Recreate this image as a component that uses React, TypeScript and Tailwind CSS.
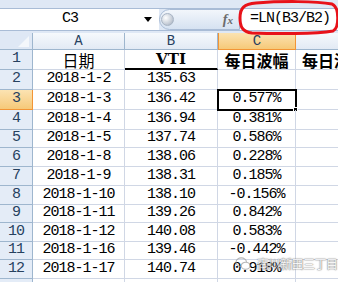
import React from 'react';

const rows = [
  { n: '1', h: 'h-[20px]', a: '日期', b: 'VTI', c: '每日波幅', d: '每日波幅', head: true },
  { n: '2', h: 'h-[20px]', a: '2018-1-2', b: '135.63', c: '' },
  { n: '3', h: 'h-[20px]', a: '2018-1-3', b: '136.42', c: '0.577%', active: true },
  { n: '4', h: 'h-[20px]', a: '2018-1-4', b: '136.94', c: '0.381%' },
  { n: '5', h: 'h-[18px]', a: '2018-1-5', b: '137.74', c: '0.586%' },
  { n: '6', h: 'h-[19px]', a: '2018-1-8', b: '138.06', c: '0.228%' },
  { n: '7', h: 'h-[19px]', a: '2018-1-9', b: '138.31', c: '0.185%' },
  { n: '8', h: 'h-[19px]', a: '2018-1-10', b: '138.10', c: '-0.156%' },
  { n: '9', h: 'h-[18px]', a: '2018-1-11', b: '139.26', c: '0.842%' },
  { n: '10', h: 'h-[19px]', a: '2018-1-12', b: '140.08', c: '0.583%' },
  { n: '11', h: 'h-[18px]', a: '2018-1-16', b: '139.46', c: '-0.442%' },
  { n: '12', h: 'h-[19px]', a: '2018-1-17', b: '140.74', c: '0.918%' },
  { n: '', h: 'h-[19px]', a: '', b: '', c: '' },
];

const mono = "font-['Liberation_Mono','Noto_Sans_CJK_SC',monospace]";
const cjk = "font-['Noto_Sans_CJK_SC',sans-serif]";

export default function App() {
  return (
    <div className="relative w-[338px] h-[282px] overflow-hidden bg-white text-black">
      {/* ribbon edge */}
      <div className="h-[9px] bg-[#dfe8f5] border-b border-[#a9bcd6]" />

      {/* formula bar */}
      <div className="flex h-[22px] border-b border-[#a9bcd6] bg-[#dfe8f5]">
        <div className="relative flex w-[159px] items-center bg-white">
          <span className={`${mono} w-[140px] text-center text-[15px] tracking-[-1px]`}>C3</span>
          <span className="absolute left-[144px] top-[8px] h-0 w-0 border-x-[4px] border-t-[5px] border-x-transparent border-t-black" />
        </div>
        <div className="flex w-[81px] items-center justify-between rounded-l-full border border-[#a9bcd6] bg-gradient-to-b from-[#f2f6fb] to-[#d6e2f1] pl-[1px] pr-[6px]">
          <span className="h-[13px] w-[13px] rounded-full border border-[#a8b4c4] bg-[radial-gradient(circle_at_35%_35%,#ffffff,#c7ced8_60%,#9aa5b4)]" />
          <span className="font-['Liberation_Serif',serif] text-[14px] font-bold italic text-[#6b6b6b]">
            f<span className="text-[11px]">x</span>
          </span>
        </div>
        <div className="flex flex-1 items-center bg-white pl-[10px]">
          <span className={`${mono} text-[15px] tracking-[-1px]`}>=LN(B3/B2)</span>
        </div>
      </div>
      <div className="h-[2px] bg-[#dfe8f5]" />

      {/* column headers */}
      <div className="flex h-[17px] bg-gradient-to-b from-[#f6f9fc] to-[#e1e9f4] text-[14px] text-[#27415f]">
        <div className="relative w-[33px] border-r border-b border-[#9eb6ce] bg-[#dfe8f5]">
          <span className="absolute bottom-[2px] right-[3px] h-0 w-0 border-l-[11px] border-b-[11px] border-l-transparent border-b-[#f4f7fb]" />
        </div>
        <div className={`${mono} flex w-[92px] items-center justify-center border-r border-b border-[#9eb6ce]`}>A</div>
        <div className={`${mono} flex w-[93px] items-center justify-center border-r border-b border-[#9eb6ce]`}>B</div>
        <div className={`${mono} flex w-[78px] items-center justify-center border border-t-0 border-[#f29536] bg-gradient-to-b from-[#fbe3b2] to-[#f6c978]`}>C</div>
        <div className="flex-1 border-b border-[#9eb6ce]" />
      </div>

      {/* grid */}
      {rows.map((r, i) => (
        <div key={i} className={`flex ${r.h}`}>
          <div
            className={`${mono} flex w-[33px] items-center justify-center border-r border-b text-[15px] tracking-[-1px] ${
              r.active
                ? 'border-[#f29536] bg-gradient-to-b from-[#fbe3b2] to-[#f6c978] text-[#27415f]'
                : 'border-[#9eb6ce] bg-[#e4ecf7] text-[#27415f]'
            }`}
          >
            {r.n}
          </div>
          <div
            className={`flex w-[92px] items-center justify-center border-r border-b border-[#d0d7e5] ${
              r.head ? `${cjk} text-[16px]` : `${mono} text-[15px] tracking-[-1px]`
            }`}
          >
            {r.a}
          </div>
          <div
            className={`flex w-[93px] items-center justify-center border-r border-[#d0d7e5] ${
              r.head
                ? "border-b-2 border-b-black font-['DejaVu_Serif',serif] text-[15px] font-bold"
                : `${mono} border-b text-[15px] tracking-[-1px]`
            }`}
          >
            {r.b}
          </div>
          <div
            className={`relative flex w-[78px] items-center justify-center border-r border-b border-[#d0d7e5] ${
              r.head ? `${cjk} text-[16px] font-bold` : `${mono} text-[15px] tracking-[-1px]`
            }`}
          >
            {r.c}
            {r.active && (
              <>
                <span className="absolute -left-[1px] -top-[1px] h-[22px] w-[80px] border-2 border-black" />
                <span className="absolute -bottom-[3px] -right-[3px] h-[5px] w-[5px] border border-white bg-black" />
              </>
            )}
          </div>
          <div
            className={`flex flex-1 items-center overflow-hidden whitespace-nowrap border-b border-[#d0d7e5] pl-[6px] ${
              r.head ? `${cjk} text-[16px] font-bold` : ''
            }`}
          >
            {r.d}
          </div>
        </div>
      ))}

      {/* red annotation */}
      <svg className="absolute left-[236px] top-0" width="104" height="36" viewBox="0 0 104 36" fill="none">
        <path
          d="M20 3 C45 1 80 1 96 4 C104 8 103 28 97 31 C80 34 40 34 16 33 C6 32 4 26 4 18 C4 8 8 4 20 3 Z"
          stroke="#e8121a"
          strokeWidth="3"
        />
      </svg>

      {/* watermark */}
      <div className="absolute left-[235px] top-[257px] flex items-center gap-[6px] opacity-75">
        <svg width="16" height="14" viewBox="0 0 18 16">
          <ellipse cx="7" cy="6" rx="6" ry="5" fill="none" stroke="#a0a0a0" strokeWidth="1.2" />
          <ellipse cx="12" cy="10" rx="5" ry="4" fill="white" stroke="#a0a0a0" strokeWidth="1.2" />
        </svg>
        <span className={`${cjk} text-[12px] leading-[14px] tracking-[-0.5px] text-[#f4f4f4] [text-shadow:0_0_1px_#666,0_0_1px_#666,0_0_2px_#888]`}>
          南川新田三丁目
        </span>
      </div>
    </div>
  );
}
